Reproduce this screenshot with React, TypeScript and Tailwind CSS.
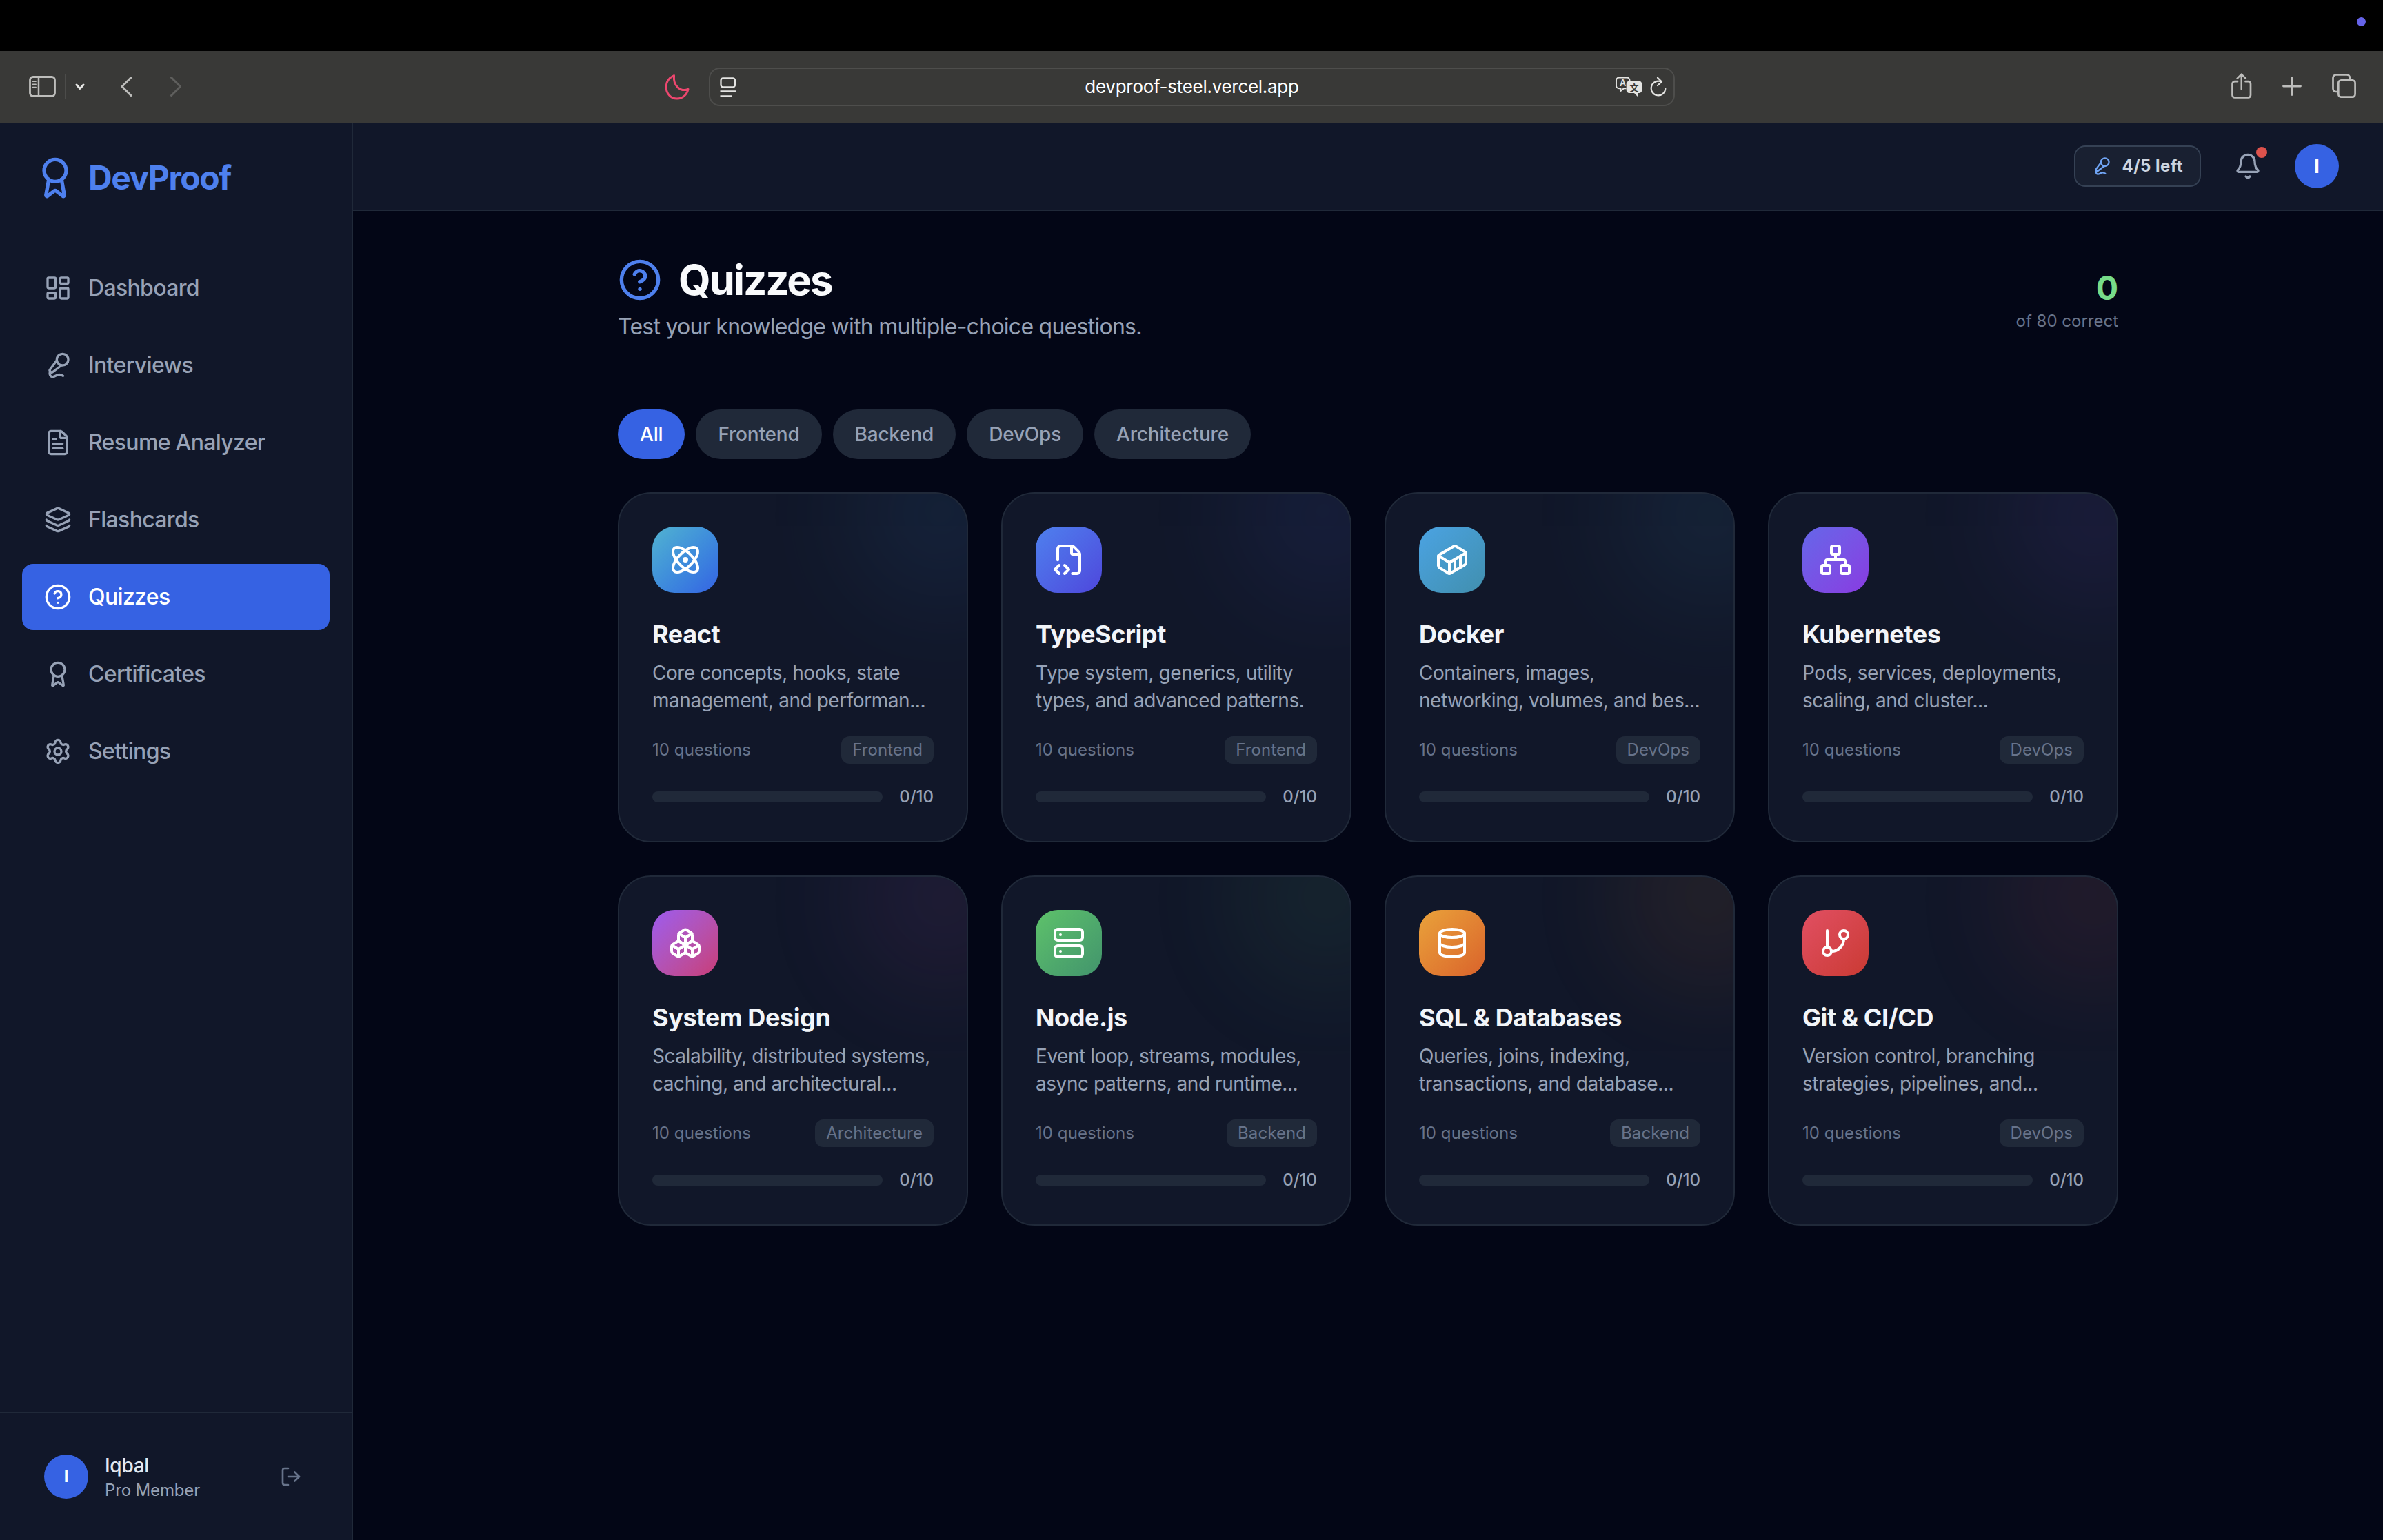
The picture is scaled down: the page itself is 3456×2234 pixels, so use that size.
import type { LucideIcon } from 'lucide-react';
import {
  Atom,
  Award,
  Bell,
  Boxes,
  CircleQuestionMark,
  Container,
  Database,
  FileCode2,
  FileText,
  GitBranch,
  Layers,
  LayoutDashboard,
  LogOut,
  MicVocal,
  Network,
  Server,
  Settings,
} from 'lucide-react';

interface Quiz {
  title: string;
  lines: [string, string];
  category: string;
  icon: LucideIcon;
  gradient: string;
}

const navItems: { label: string; icon: LucideIcon }[] = [
  { label: 'Dashboard', icon: LayoutDashboard },
  { label: 'Interviews', icon: MicVocal },
  { label: 'Resume Analyzer', icon: FileText },
  { label: 'Flashcards', icon: Layers },
  { label: 'Quizzes', icon: CircleQuestionMark },
  { label: 'Certificates', icon: Award },
  { label: 'Settings', icon: Settings },
];

const filters = ['All', 'Frontend', 'Backend', 'DevOps', 'Architecture'];

const quizzes: Quiz[] = [
  {
    title: 'React',
    lines: ['Core concepts, hooks, state', 'management, and performan...'],
    category: 'Frontend',
    icon: Atom,
    gradient: 'from-[#52b3d0] to-[#3662e3]',
  },
  {
    title: 'TypeScript',
    lines: ['Type system, generics, utility', 'types, and advanced patterns.'],
    category: 'Frontend',
    icon: FileCode2,
    gradient: 'from-[#4e80ee] to-[#4e46dc]',
  },
  {
    title: 'Docker',
    lines: ['Containers, images,', 'networking, volumes, and bes...'],
    category: 'DevOps',
    icon: Container,
    gradient: 'from-[#4ba3e3] to-[#418fae]',
  },
  {
    title: 'Kubernetes',
    lines: ['Pods, services, deployments,', 'scaling, and cluster...'],
    category: 'DevOps',
    icon: Network,
    gradient: 'from-[#6466e9] to-[#883ae1]',
  },
  {
    title: 'System Design',
    lines: ['Scalability, distributed systems,', 'caching, and architectural...'],
    category: 'Architecture',
    icon: Boxes,
    gradient: 'from-[#9d5aef] to-[#c93b76]',
  },
  {
    title: 'Node.js',
    lines: ['Event loop, streams, modules,', 'async patterns, and runtime...'],
    category: 'Backend',
    icon: Server,
    gradient: 'from-[#5ec26a] to-[#42946c]',
  },
  {
    title: 'SQL & Databases',
    lines: ['Queries, joins, indexing,', 'transactions, and database...'],
    category: 'Backend',
    icon: Database,
    gradient: 'from-[#e9a23b] to-[#d9622b]',
  },
  {
    title: 'Git & CI/CD',
    lines: ['Version control, branching', 'strategies, pipelines, and...'],
    category: 'DevOps',
    icon: GitBranch,
    gradient: 'from-[#e14f62] to-[#ca3a32]',
  },
];

function BrowserBar() {
  return (
    <div className="relative z-10 grid h-[104px] shrink-0 grid-cols-[964px_64px_1401px_1fr] items-center bg-[#393937] text-[#bdbdbb] shadow-[0_1px_0_#000]">
      <div className="flex items-center pl-[42px]">
        <svg width="40" height="32" viewBox="0 0 40 32" fill="none" stroke="currentColor">
          <rect x="1.5" y="1.5" width="36" height="28" rx="4.5" strokeWidth="2.8" />
          <path d="M14 2v27" strokeWidth="2.5" />
          <path d="M5.5 8h4.5M5.5 12.3h4.5M5.5 16.6h4.5" strokeWidth="1.8" strokeLinecap="round" />
        </svg>
        <div className="ml-3 h-9 w-0.5 bg-[#4c4c4a]" />
        <svg className="ml-[13px] text-[#e8e8e6]" width="14" height="10" viewBox="0 0 14 10" fill="none" stroke="currentColor" strokeWidth="3" strokeLinecap="round" strokeLinejoin="round">
          <path d="M2 2l5 5.5L12 2" />
        </svg>
        <svg className="ml-[52px]" width="18" height="30" viewBox="0 0 18 30" fill="none" stroke="currentColor" strokeWidth="3" strokeLinecap="round" strokeLinejoin="round">
          <path d="M15 1.5L2 14.500l13 13" />
        </svg>
        <svg className="ml-[54px] text-[#5f5f5d]" width="18" height="30" viewBox="0 0 18 30" fill="none" stroke="currentColor" strokeWidth="3" strokeLinecap="round" strokeLinejoin="round">
          <path d="M1.5 1.5l13 13-13 13" />
        </svg>
      </div>

      <svg width="38" height="38" viewBox="0 0 38 38" fill="none" stroke="#ee476f" strokeWidth="3" strokeLinejoin="round">
        <path d="M13.5 2.5C6 6 2 12 2 19c0 10 7 17 16 17 7.500 0 14-5 16-13.500C23 26.500 12 18 13.500 2.500Z" />
      </svg>

      <div className="flex h-14 items-center rounded-[16px] border-2 border-[#4e4e4c] text-[#e4e4e2]">
        <div className="w-[90px] pl-3.5">
          <svg width="24" height="29" viewBox="0 0 24 29" fill="none" stroke="currentColor" strokeWidth="2.3">
            <rect x="1.5" y="1.5" width="20.5" height="12.800" rx="3" />
            <path d="M.5 20.500h22.500M.5 27.300h17" />
          </svg>
        </div>
        <span className="flex-1 text-center text-[26px] leading-8 tracking-[-0.011em] text-white">devproof-steel.vercel.app</span>
        <div className="flex w-[90px] items-center justify-end gap-[11px] pr-2.5">
          <svg width="39" height="30" viewBox="0 0 39 30" className="shrink-0 font-['Inter','Noto_Sans_CJK_SC',sans-serif]">
            <path
              d="M15.500 17.200h-3.500L7.500 21v-3.800H5a4 4 0 0 1-4-4V5.500a4 4 0 0 1 4-4h11.500a4 4 0 0 1 4 4V7"
              fill="none"
              stroke="currentColor"
              strokeWidth="1.900"
              strokeLinejoin="round"
            />
            <path d="M20 6.500h14a4.300 4.300 0 0 1 4.300 4.300v9a4.300 4.300 0 0 1-4.300 4.300h-2V29l-5-4.900h-7a4.300 4.300 0 0 1-4.300-4.300v-9A4.300 4.300 0 0 1 20 6.500Z" fill="currentColor" />
            <text x="10.500" y="14" fontSize="12.500" fontWeight="600" textAnchor="middle" fill="currentColor">A</text>
            <text x="27" y="20.500" fontSize="13" fontWeight="700" textAnchor="middle" fill="#393937">文</text>
          </svg>
          <svg className="shrink-0" width="24" height="30" viewBox="0 0 24 30" fill="none" stroke="currentColor" strokeWidth="2.200" strokeLinecap="round" strokeLinejoin="round">
            <path d="M16.500 7.800A10.300 10.300 0 1 0 22.300 17" />
            <path d="M11 1.800l6 5.700-6 5.500" />
          </svg>
        </div>
      </div>

      <div className="flex items-center justify-end pr-[39px] pb-[3px]" >
        <svg width="30" height="37" viewBox="0 0 30 37" fill="none" stroke="currentColor" strokeWidth="2.700" strokeLinecap="round" strokeLinejoin="round">
          <path d="M9 12.200H5a3.500 3.500 0 0 0-3.500 3.500V32A3.500 3.500 0 0 0 5 35.500h19.500A3.500 3.500 0 0 0 28 32V15.700a3.500 3.500 0 0 0-3.500-3.500h-4" />
          <path d="M14.700 23.500V2M8.500 7.800l6.200-6.200 6.200 6.200" strokeWidth="2.400" />
        </svg>
        <svg className="ml-11" width="28" height="28" viewBox="0 0 28 28" fill="none" stroke="currentColor" strokeWidth="2.800" strokeLinecap="round">
          <path d="M14 1.500v25M1.500 14h25" />
        </svg>
        <svg className="ml-11" width="35" height="35" viewBox="0 0 35 35" fill="none" stroke="currentColor" strokeWidth="2.700" strokeLinejoin="round">
          <rect x="9.300" y="9.300" width="24.300" height="24.300" rx="4" />
          <path d="M9 26H6a4.500 4.500 0 0 1-4.500-4.500V6A4.500 4.500 0 0 1 6 1.500h15.500A4.500 4.500 0 0 1 26 6v3" />
        </svg>
      </div>
    </div>
  );
}

function Sidebar() {
  return (
    <aside className="flex w-[512px] shrink-0 flex-col border-r-2 border-[#202939] bg-[#111729]">
      <div className="flex items-center gap-4 p-12">
        <Award className="size-16 text-[#4e80ee]" />
        <span className="text-5xl leading-[64px] font-bold tracking-[-0.031em] text-[#4e80ee]">DevProof</span>
      </div>
      <nav className="flex flex-1 flex-col gap-4 px-8 pt-8">
        {navItems.map(({ label, icon: Icon }) => (
          <a
            key={label}
            href="#"
            className={`flex h-24 items-center gap-6 rounded-2xl px-8 text-[32px] font-medium tracking-[-0.021em] ${
              label === 'Quizzes' ? 'bg-[#3662e3] text-white' : 'text-[#97a2b6]'
            }`}
          >
            <Icon className="size-10" />
            {label}
          </a>
        ))}
      </nav>
      <div className="border-t-2 border-[#202939] p-8">
        <div className="flex items-center gap-6 px-8 py-6">
          <div className="flex size-16 items-center justify-center rounded-full bg-[#3662e3] text-2xl font-bold text-white">I</div>
          <div className="flex-1">
            <p className="text-[28px] leading-10 font-medium tracking-[-0.01em] text-[#e3e8ef]">Iqbal</p>
            <p className="text-2xl tracking-[-0.006em] text-[#97a2b6]">Pro Member</p>
          </div>
          <button className="p-2 text-[#67738a]">
            <LogOut className="size-8" />
          </button>
        </div>
      </div>
    </aside>
  );
}

function Header() {
  return (
    <header className="flex h-32 shrink-0 items-center justify-end gap-8 border-b-2 border-[#202939] bg-[#111729] pr-16">
      <div className="flex items-center gap-4 rounded-2xl border-2 border-[#354154] bg-[#192031] px-6 py-3 text-2xl font-bold tracking-[0.019em] text-[#ccd5e0]">
        <MicVocal className="size-7 text-[#70a4f4]" />
        4/5 left
      </div>
      <button className="relative p-4 text-[#97a2b6]">
        <Bell className="size-10" />
        <span className="absolute top-2 right-2 size-4 rounded-full bg-[#dd524c]" />
      </button>
      <div className="flex size-16 items-center justify-center rounded-full bg-[#3662e3] text-[28px] font-bold text-white">I</div>
    </header>
  );
}

function QuizCard({ quiz }: { quiz: Quiz }) {
  const Icon = quiz.icon;

  return (
    <div className="relative h-[508px] overflow-hidden rounded-[48px] border-2 border-[#202939] bg-[#111729] p-12">
      <div className={`absolute -top-24 -right-24 size-64 rounded-full bg-gradient-to-br opacity-10 blur-[80px] ${quiz.gradient}`} />
      <div className={`relative flex size-24 items-center justify-center rounded-[32px] bg-gradient-to-br text-white ${quiz.gradient}`}>
        <Icon className="size-12" />
      </div>
      <h3 className="relative mt-8 text-4xl leading-[56px] font-bold tracking-[-0.011em] text-[#f2f5f9]">{quiz.title}</h3>
      <p className="relative mt-2 text-[28px] leading-10 tracking-[-0.016em] whitespace-nowrap text-[#97a2b6]">
        {quiz.lines[0]}
        <br />
        {quiz.lines[1]}
      </p>
      <div className="mt-8 flex items-center justify-between text-2xl tracking-[0.003em] text-[#67738a]">
        <span>10 questions</span>
        <span className="rounded-xl bg-[#202939] px-4 py-1">{quiz.category}</span>
      </div>
      <div className="mt-8 flex items-center gap-6">
        <div className="h-4 flex-1 rounded-full bg-[#202939]" />
        <span className="w-[50px] text-right text-2xl font-medium whitespace-nowrap text-[#97a2b6]">0/10</span>
      </div>
    </div>
  );
}

export default function App() {
  return (
    <div className="flex h-[2234px] w-[3456px] flex-col overflow-hidden bg-black font-['Inter',sans-serif]">
      <div className="flex h-[74px] shrink-0 items-start justify-end pt-[25px] pr-[25px]">
        <div className="size-[13px] rounded-full bg-[#6563e8]" />
      </div>
      <BrowserBar />

      <div className="flex min-h-0 flex-1">
        <Sidebar />
        <div className="flex flex-1 flex-col bg-[#030616]">
          <Header />
          <main className="mx-auto w-[2176px] pt-16">
            <div className="flex items-center justify-between">
              <div>
                <div className="flex items-center gap-6">
                  <CircleQuestionMark className="size-16 text-[#4e80ee]" />
                  <h1 className="text-6xl leading-[72px] font-bold tracking-[-0.035em] text-[#f9fafc]">Quizzes</h1>
                </div>
                <p className="mt-2 text-[32px] leading-[48px] tracking-[-0.023em] text-[#97a2b6]">Test your knowledge with multiple-choice questions.</p>
              </div>
              <div className="text-right">
                <p className="text-5xl leading-[64px] font-bold text-[#77db89]">0</p>
                <p className="text-2xl text-[#67738a]">of 80 correct</p>
              </div>
            </div>

            <div className="mt-24 flex gap-4">
              {filters.map((filter) => (
                <button
                  key={filter}
                  className={`h-[72px] rounded-full px-8 text-[28px] font-medium tracking-[-0.007em] ${
                    filter === 'All' ? 'bg-[#3662e3] text-white' : 'bg-[#202939] text-[#97a2b6]'
                  }`}
                >
                  {filter}
                </button>
              ))}
            </div>

            <div className="mt-12 grid grid-cols-4 gap-12">
              {quizzes.map((quiz) => (
                <QuizCard key={quiz.title} quiz={quiz} />
              ))}
            </div>
          </main>
        </div>
      </div>
    </div>
  );
}
